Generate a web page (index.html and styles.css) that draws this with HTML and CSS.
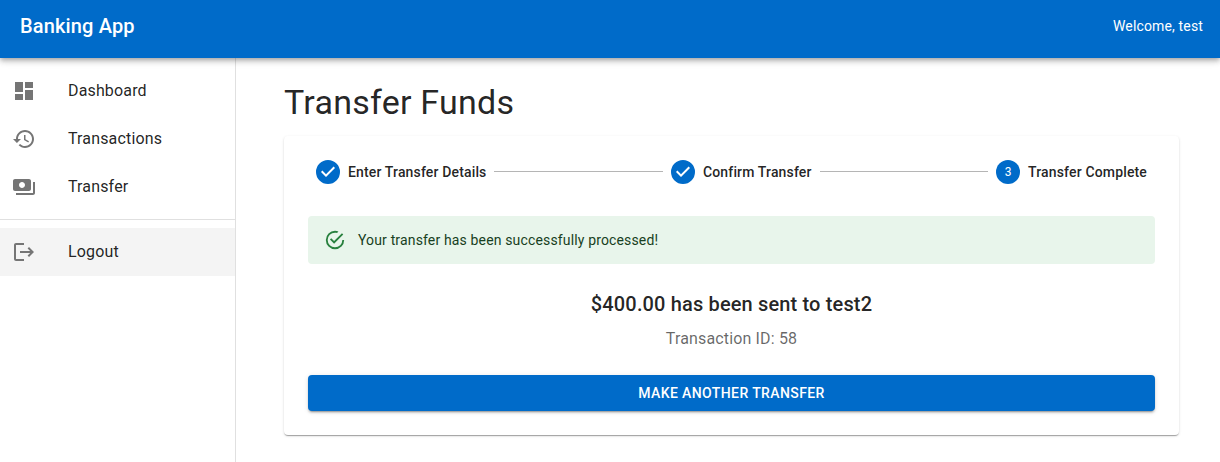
FILE: index.html
```html
<!DOCTYPE html>
<html lang="en">
<head>
<meta charset="utf-8">
<title>Banking App</title>
<link rel="stylesheet" href="styles.css">
</head>
<body>
<header class="app-bar">
  <div class="brand">Banking App</div>
  <div class="welcome">Welcome, test</div>
</header>
<div class="shell">
  <nav class="sidebar">
    <a class="nav-item"><svg class="nav-icon" viewBox="0 0 24 24"><path d="M3 13h8V3H3v10zm0 8h8v-6H3v6zm10 0h8V11h-8v10zm0-18v6h8V3h-8z"/></svg><span>Dashboard</span></a>
    <a class="nav-item"><svg class="nav-icon" viewBox="0 0 24 24"><path d="M13 3c-4.97 0-9 4.03-9 9H1l3.89 3.89.07.14L9 12H6c0-3.87 3.13-7 7-7s7 3.13 7 7-3.13 7-7 7c-1.93 0-3.68-.79-4.94-2.06l-1.42 1.42C8.27 19.99 10.51 21 13 21c4.97 0 9-4.03 9-9s-4.03-9-9-9zm-1 5v5l4.28 2.54.72-1.21-3.5-2.08V8H12z"/></svg><span>Transactions</span></a>
    <a class="nav-item"><svg class="nav-icon" viewBox="0 0 24 24"><path d="M19 14V6c0-1.100-.9-2-2-2H3c-1.100 0-2 .9-2 2v8c0 1.100.9 2 2 2h14c1.100 0 2-.9 2-2zm-9-1c-1.660 0-3-1.340-3-3s1.340-3 3-3 3 1.340 3 3-1.340 3-3 3zm13-6v11c0 1.100-.9 2-2 2H4v-2h17V7h2z"/></svg><span>Transfer</span></a>
    <div class="divider"></div>
    <a class="nav-item active"><svg class="nav-icon" viewBox="0 0 24 24"><path d="m17 7-1.410 1.410L18.170 11H8v2h10.170l-2.580 2.580L17 17l5-5zM4 5h8V3H4c-1.100 0-2 .9-2 2v14c0 1.100.9 2 2 2h8v-2H4V5z"/></svg><span>Logout</span></a>
  </nav>
  <main class="content">
    <h1 class="title">Transfer Funds</h1>
    <section class="card">
      <div class="stepper">
        <div class="step"><svg class="step-icon" viewBox="0 0 24 24"><path d="M12 0a12 12 0 1 0 0 24 12 12 0 0 0 0-24zm-2 17l-5-5 1.400-1.400 3.600 3.600 7.600-7.600L19 8l-9 9z"/></svg><span>Enter Transfer Details</span></div>
        <div class="connector"></div>
        <div class="step"><svg class="step-icon" viewBox="0 0 24 24"><path d="M12 0a12 12 0 1 0 0 24 12 12 0 0 0 0-24zm-2 17l-5-5 1.400-1.400 3.600 3.600 7.600-7.600L19 8l-9 9z"/></svg><span>Confirm Transfer</span></div>
        <div class="connector"></div>
        <div class="step"><span class="step-number">3</span><span>Transfer Complete</span></div>
      </div>
      <div class="alert"><svg class="alert-icon" viewBox="0 0 24 24"><path d="M20,12A8,8 0 0,1 12,20A8,8 0 0,1 4,12A8,8 0 0,1 12,4C12.76,4 13.5,4.11 14.2,4.31L15.77,2.74C14.61,2.26 13.34,2 12,2A10,10 0 0,0 2,12A10,10 0 0,0 12,22A10,10 0 0,0 22,12M7.91,10.080L6.500,11.500L11,16L21,6L19.590,4.580L11,13.170L7.910,10.080Z"/></svg><span>Your transfer has been successfully processed!</span></div>
      <h2 class="result">$400.00 has been sent to test2</h2>
      <p class="transaction-id">Transaction ID: 58</p>
      <button class="primary-button">MAKE ANOTHER TRANSFER</button>
    </section>
  </main>
</div>
</body>
</html>
```
FILE: styles.css
```css
* { box-sizing: border-box; }
html, body { height: 100%; }
body {
  margin: 0;
  overflow: hidden;
  display: flex;
  flex-direction: column;
  background: #fff;
  color: rgba(0, 0, 0, .87);
  font: 400 16px/24px Roboto, sans-serif;
  letter-spacing: .15008px;
  -webkit-font-smoothing: antialiased;
}
.app-bar {
  position: relative;
  z-index: 1;
  flex: none;
  height: 58px;
  padding: 0 17px 6px 20px;
  display: flex;
  align-items: center;
  justify-content: space-between;
  background: #006bc9;
  color: #fff;
  box-shadow: 0 2px 4px -1px rgba(0,0,0,.2), 0 4px 5px rgba(0,0,0,.14), 0 1px 10px rgba(0,0,0,.12);
}
.brand { font-size: 20px; font-weight: 500; line-height: 32px; letter-spacing: .15px; }
.welcome { font-size: 14px; line-height: 20px; letter-spacing: .15px; }
.shell { flex: 1; display: flex; min-height: 0; }
.sidebar { width: 236px; flex: none; padding-top: 9px; border-right: 1px solid #e0e0e0; }
.nav-item { display: flex; align-items: center; height: 48px; padding-left: 12px; }
.nav-item.active { background: #f4f4f4; }
.nav-icon { width: 24px; height: 24px; margin-right: 32px; fill: #757575; }
.divider { height: 1px; margin: 8px 0; background: #e0e0e0; }
.content { flex: 1; padding: 23px 41px 0 48px; }
.title { margin: 0 0 13px; font-size: 34px; font-weight: 400; line-height: 42px; letter-spacing: .25px; }
.card {
  height: 299px;
  padding: 24px;
  border-radius: 4px;
  background: #fff;
  box-shadow: 0 2px 1px -1px rgba(0,0,0,.2), 0 1px 1px rgba(0,0,0,.14), 0 1px 3px rgba(0,0,0,.12);
}
.stepper { display: flex; align-items: center; height: 24px; margin-bottom: 32px; }
.step { display: flex; align-items: center; gap: 8px; padding: 0 8px; font-size: 14px; line-height: 20px; font-weight: 500; white-space: nowrap; }
.step-icon { width: 24px; height: 24px; fill: #006bc9; }
.step-number { width: 24px; height: 24px; border-radius: 50%; background: #006bc9; color: #fff; font-size: 12px; font-weight: 400; line-height: 24px; text-align: center; letter-spacing: 0; }
.connector { flex: 1; height: 1px; margin-bottom: 1px; background: #b5b5b5; }
.alert { display: flex; align-items: center; height: 48px; padding: 0 16px; border-radius: 4px; background: #e8f5eb; color: #173f22; font-size: 14px; line-height: 20px; }
.alert-icon { width: 22px; height: 22px; margin-right: 12px; fill: #28803e; }
.result { margin: 24px 0 7px; font-size: 20px; font-weight: 500; line-height: 32px; letter-spacing: .15px; text-align: center; }
.transaction-id { margin: 0 0 24px; text-align: center; color: rgba(0,0,0,.6); }
.primary-button { display: block; width: 100%; height: 36px; padding: 0; border: 0; border-radius: 4px; background: #006bc9; color: #fff; font: 500 14px/24px Roboto, sans-serif; letter-spacing: .4px; box-shadow: 0 3px 1px -2px rgba(0,0,0,.2), 0 2px 2px rgba(0,0,0,.14), 0 1px 5px rgba(0,0,0,.12); }
```
